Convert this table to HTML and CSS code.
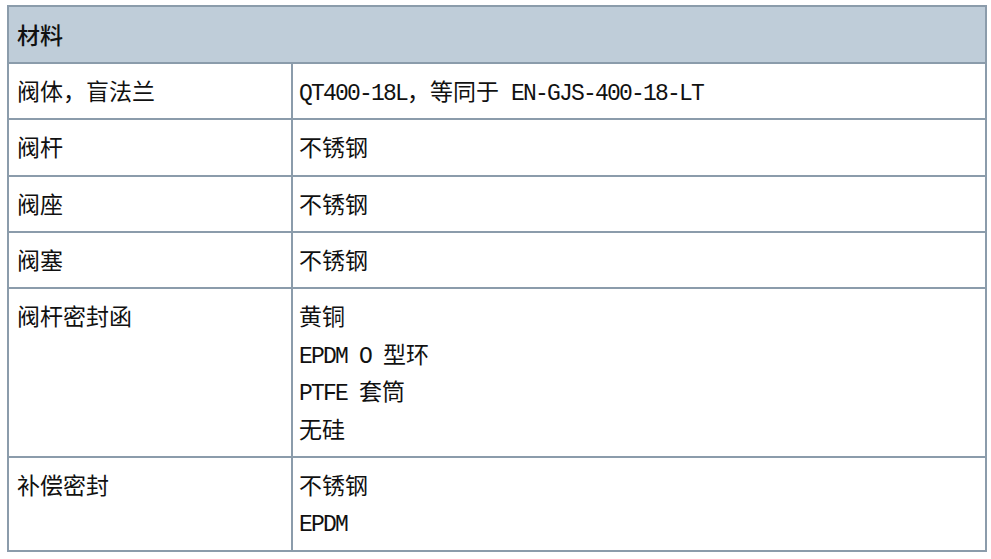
FILE: index.html
```html
<!DOCTYPE html>
<html lang="zh">
<head>
<meta charset="utf-8">
<title>材料</title>
<link rel="stylesheet" href="styles.css">
</head>
<body>
<div class="page">
  <table class="spec">
    <colgroup>
      <col class="col-name">
      <col class="col-val">
    </colgroup>
    <thead>
      <tr><th colspan="2">材料</th></tr>
    </thead>
    <tbody>
      <tr>
        <td class="name">阀体，盲法兰</td>
        <td class="val"><span class="lat">QT400-18L</span>，等同于<span class="lat"> EN-GJS-400-18-LT</span></td>
      </tr>
      <tr>
        <td class="name">阀杆</td>
        <td class="val">不锈钢</td>
      </tr>
      <tr>
        <td class="name">阀座</td>
        <td class="val">不锈钢</td>
      </tr>
      <tr>
        <td class="name">阀塞</td>
        <td class="val">不锈钢</td>
      </tr>
      <tr>
        <td class="name">阀杆密封函</td>
        <td class="val">
          <div class="line">黄铜</div>
          <div class="line"><span class="lat">EPDM O </span>型环</div>
          <div class="line"><span class="lat">PTFE </span>套筒</div>
          <div class="line">无硅</div>
        </td>
      </tr>
      <tr>
        <td class="name">补偿密封</td>
        <td class="val">
          <div class="line">不锈钢</div>
          <div class="line"><span class="lat">EPDM</span></div>
        </td>
      </tr>
    </tbody>
  </table>
</div>
</body>
</html>
```
FILE: styles.css
```css
html, body {
  margin: 0;
  padding: 0;
  background: #ffffff;
}

.page {
  padding: 5px 0 0 7px;
}

.spec {
  width: 980px;
  border-collapse: collapse;
  border: 2px solid #8b9cab;
  font-family: "Noto Sans CJK SC", "Noto Sans", sans-serif;
  font-size: 23px;
  color: #111;
  table-layout: fixed;
}

.col-name {
  width: 284px;
}

.spec th {
  background: #bfcdd9;
  text-align: left;
  font-weight: 500;
  line-height: 37.5px;
  height: 37.5px;
  padding: 9px 8px 8.5px 8px;
  border: 2px solid #8b9cab;
}

.spec td {
  border: 2px solid #8b9cab;
  vertical-align: top;
  line-height: 37.5px;
  padding: 8px 6px 8.75px 6px;
}

.spec td.name {
  padding-left: 8px;
}

.spec td.val {
  padding-left: 6px;
}

.line {
  height: 37.5px;
}

.lat {
  font-family: "Liberation Mono", monospace;
  font-size: 23px;
  letter-spacing: -1.8px;
  line-height: 20px;
  white-space: pre;
}
```
